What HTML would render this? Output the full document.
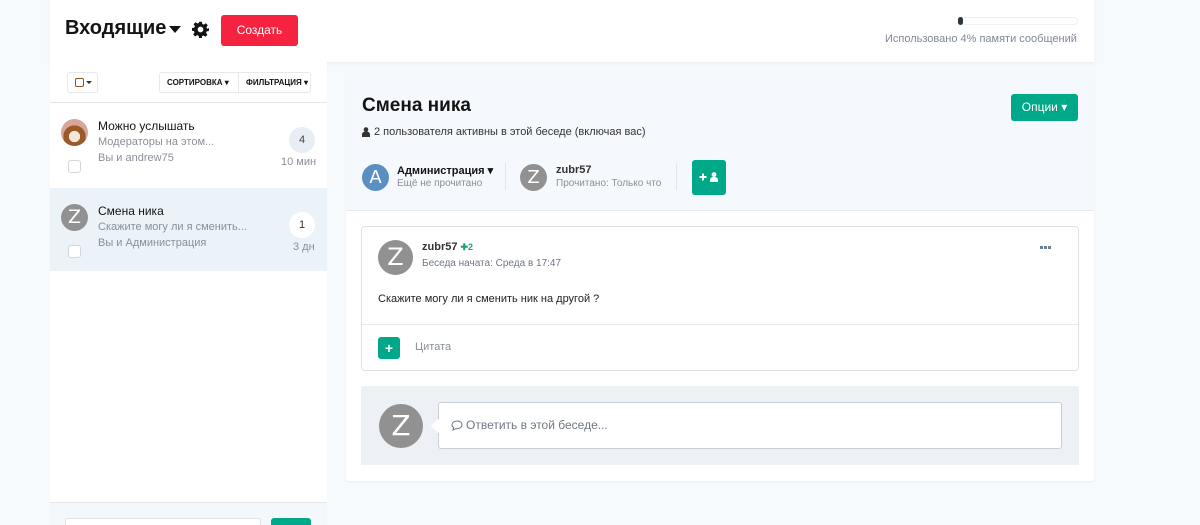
<!DOCTYPE html>
<html><head><meta charset="utf-8"><style>
*{box-sizing:border-box;margin:0;padding:0}
html,body{width:1200px;height:525px;overflow:hidden}
body{background:#f7fafc;font-family:"Liberation Sans",sans-serif;color:#141414;position:relative}
.a{position:absolute}
.av{position:absolute;border-radius:50%;color:#fff;text-align:center;font-family:"DejaVu Sans",sans-serif}
.mut{color:#8a8f99}
.gbtn{background:#00a88a;border-radius:3px}
</style></head><body>
<div class="a" style="left:50px;top:0;width:1044px;height:62px;background:#fff;box-shadow:0 2px 4px rgba(0,0,0,.05)"></div>
<div class="a" style="left:65px;top:17px;font-size:20px;font-weight:bold">Входящие</div>
<div class="a" style="left:169px;top:26px;width:0;height:0;border-left:6px solid transparent;border-right:6px solid transparent;border-top:7px solid #141414"></div>
<svg class="a" style="left:192px;top:21px" width="17" height="17" viewBox="0 0 24 24"><path fill="#141414" d="M10 1h4l.6 3.2 2.2.9 2.7-1.9 2.8 2.8-1.9 2.7.9 2.2L24 10v4l-3.2.6-.9 2.2 1.9 2.7-2.8 2.8-2.7-1.9-2.2.9L14 24h-4l-.6-3.2-2.2-.9-2.7 1.9-2.8-2.8 1.9-2.7-.9-2.2L0 14v-4l3.2-.6.9-2.2L2.2 4.5 5 1.7l2.7 1.9 2.2-.9zM12 8a4 4 0 100 8 4 4 0 000-8z"/></svg>
<div class="a" style="left:221px;top:15px;width:77px;height:31px;background:#f5233f;border-radius:3px;color:#fff;font-size:12px;text-align:center;line-height:31px">Создать</div>
<div class="a" style="left:958px;top:17px;width:120px;height:8px;border:1px solid #eef0f3;border-radius:4px;background:#fff"></div>
<div class="a" style="left:958px;top:17px;width:5px;height:8px;border-radius:3px;background:#2b3340"></div>
<div class="a" style="left:885px;top:33px;font-size:11px;color:#7f8797">Использовано 4% памяти сообщений</div>

<div class="a" style="left:50px;top:62px;width:277px;height:440px;background:#fff"></div>
<div class="a" style="left:67px;top:72px;width:31px;height:21px;border:1px solid #e5e8ec;border-radius:3px"></div>
<div class="a" style="left:75px;top:78px;width:9px;height:9px;border:1.5px solid #8a5a20;border-radius:2px"></div>
<div class="a" style="left:86px;top:81px;border-left:3px solid transparent;border-right:3px solid transparent;border-top:3px solid #333"></div>
<div class="a" style="left:159px;top:72px;width:152px;height:21px;border:1px solid #e5e8ec;border-radius:3px;font-size:8px;font-weight:bold;line-height:19px"><span style="position:absolute;left:7px">СОРТИРОВКА ▾</span><span style="position:absolute;left:78px;top:0;height:19px;border-left:1px solid #e5e8ec"></span><span style="position:absolute;left:86px">ФИЛЬТРАЦИЯ ▾</span></div>
<div class="a" style="left:50px;top:102px;width:277px;height:1px;background:#e3e6ea"></div>
<div class="av" style="left:61px;top:119px;width:27px;height:27px;background:radial-gradient(circle at 50% 65%,#f3e7d8 0 25%,#9a5a2a 26% 50%,#d9a49a 51%)"></div>
<div class="a" style="left:98px;top:119px;font-size:12px">Можно услышать</div>
<div class="a mut" style="left:98px;top:136px;font-size:11px">Модераторы на этом...</div>
<div class="a mut" style="left:98px;top:152px;font-size:11px">Вы и andrew75</div>
<div class="a" style="left:68px;top:160px;width:13px;height:13px;border:1px solid #d3d7dc;border-radius:3px;background:#fff"></div>
<div class="a" style="left:289px;top:127px;width:26px;height:26px;border-radius:50%;background:#e9eef4;font-size:11px;text-align:center;line-height:26px;color:#444">4</div>
<div class="a mut" style="left:281px;top:156px;font-size:11px">10 мин</div>
<div class="a" style="left:50px;top:188px;width:277px;height:83px;background:#ebf3f9"></div>
<div class="av" style="left:61px;top:204px;width:27px;height:27px;background:#919191;font-size:19px;line-height:27px">Z</div>
<div class="a" style="left:98px;top:204px;font-size:12px">Смена ника</div>
<div class="a mut" style="left:98px;top:221px;font-size:11px">Скажите могу ли я сменить...</div>
<div class="a mut" style="left:98px;top:237px;font-size:11px">Вы и Администрация</div>
<div class="a" style="left:68px;top:245px;width:13px;height:13px;border:1px solid #d3d7dc;border-radius:3px;background:#fff"></div>
<div class="a" style="left:289px;top:212px;width:26px;height:26px;border-radius:50%;background:#fff;font-size:11px;text-align:center;line-height:26px;color:#333">1</div>
<div class="a mut" style="left:293px;top:241px;font-size:11px">3 дн</div>
<div class="a" style="left:50px;top:502px;width:277px;height:23px;background:#f5f8fb;border-top:1px solid #e3e8ee"></div>
<div class="a" style="left:65px;top:518px;width:196px;height:12px;background:#fff;border:1px solid #dfe3e8;border-radius:3px"></div>
<div class="a gbtn" style="left:271px;top:518px;width:40px;height:12px"></div>

<div class="a" style="left:346px;top:78px;width:748px;height:403px;background:#fff;border-radius:3px;box-shadow:0 1px 2px rgba(0,0,0,.05)"></div>
<div class="a" style="left:346px;top:78px;width:748px;height:133px;background:#f5f8fc;border-bottom:1px solid #e6e9ed"></div>
<div class="a" style="left:362px;top:95px;font-size:19px;font-weight:bold">Смена ника</div>
<svg class="a" style="left:362px;top:127px" width="8" height="10" viewBox="0 0 8 10"><circle cx="4" cy="2.5" r="2.3" fill="#333"/><path d="M0 10v-2.5a3 3 0 013-3h2a3 3 0 013 3V10z" fill="#333"/></svg>
<div class="a" style="left:374px;top:126px;font-size:11px;color:#333">2 пользователя активны в этой беседе (включая вас)</div>
<div class="a gbtn" style="left:1011px;top:94px;width:67px;height:27px;color:#fff;font-size:12px;text-align:center;line-height:27px">Опции ▾</div>
<div class="av" style="left:362px;top:164px;width:27px;height:27px;background:#5b8fc2;font-size:18px;line-height:27px">A</div>
<div class="a" style="left:397px;top:164px;font-size:11px;font-weight:bold">Администрация ▾</div>
<div class="a mut" style="left:397px;top:178px;font-size:10px">Ещё не прочитано</div>
<div class="a" style="left:505px;top:163px;width:1px;height:27px;background:#e3e6ea"></div>
<div class="av" style="left:520px;top:164px;width:27px;height:27px;background:#919191;font-size:18px;line-height:27px">Z</div>
<div class="a" style="left:556px;top:164px;font-size:11px;font-weight:bold;color:#333">zubr57</div>
<div class="a mut" style="left:556px;top:178px;font-size:10px">Прочитано: Только что</div>
<div class="a" style="left:676px;top:163px;width:1px;height:27px;background:#e3e6ea"></div>
<div class="a gbtn" style="left:692px;top:160px;width:34px;height:35px"></div>
<svg class="a" style="left:699px;top:172px" width="21" height="10" viewBox="0 0 21 10"><path d="M3 1.5h2v2.5h2.5v2H5v2.5H3V6H.5V4H3z" fill="#fff"/><circle cx="15" cy="2.6" r="2.4" fill="#fff"/><path d="M11 10V8a3 3 0 013-3h2a3 3 0 013 3v2z" fill="#fff"/></svg>

<div class="a" style="left:361px;top:226px;width:718px;height:145px;border:1px solid #dde1e6;border-radius:4px;background:#fff"></div>
<div class="av" style="left:378px;top:240px;width:35px;height:35px;background:#919191;font-size:24px;line-height:35px">Z</div>
<div class="a" style="left:422px;top:241px;font-size:11px;font-weight:bold;color:#333">zubr57 <span style="color:#17a37a;font-size:9px">✚2</span></div>
<div class="a" style="left:422px;top:258px;font-size:10px;color:#6f7785">Беседа начата: Среда в 17:47</div>
<div class="a" style="left:1040px;top:246px;width:3px;height:3px;background:#6d7e95"></div>
<div class="a" style="left:1044px;top:246px;width:3px;height:3px;background:#6d7e95"></div>
<div class="a" style="left:1048px;top:246px;width:3px;height:3px;background:#6d7e95"></div>
<div class="a" style="left:378px;top:293px;font-size:11px;color:#222">Скажите могу ли я сменить ник на другой ?</div>
<div class="a" style="left:362px;top:324px;width:716px;height:1px;background:#e6e9ed"></div>
<div class="a gbtn" style="left:378px;top:337px;width:22px;height:22px;color:#fff;font-weight:bold;text-align:center;line-height:22px;font-size:14px">+</div>
<div class="a mut" style="left:415px;top:341px;font-size:11px">Цитата</div>
<div class="a" style="left:361px;top:386px;width:718px;height:79px;background:#edf1f6"></div>
<div class="av" style="left:379px;top:404px;width:44px;height:44px;background:#919191;font-size:28px;line-height:44px">Z</div>
<div class="a" style="left:438px;top:402px;width:624px;height:47px;background:#fff;border:1px solid #c8cfd9;border-radius:3px"></div>
<div class="a" style="left:433px;top:421px;width:10px;height:10px;background:#fff;transform:rotate(45deg)"></div>
<svg class="a" style="left:451px;top:420px" width="12" height="11" viewBox="0 0 12 11"><path d="M6 1C3 1 1 2.8 1 4.8c0 1.2.6 2.2 1.7 2.9L2 10l2.6-1.4c.4.1.9.1 1.4.1 3 0 5-1.8 5-3.9S9 1 6 1z" fill="none" stroke="#6f7785" stroke-width="1"/></svg>
<div class="a" style="left:466px;top:418px;font-size:12px;color:#6f7785">Ответить в этой беседе...</div>
</body></html>
